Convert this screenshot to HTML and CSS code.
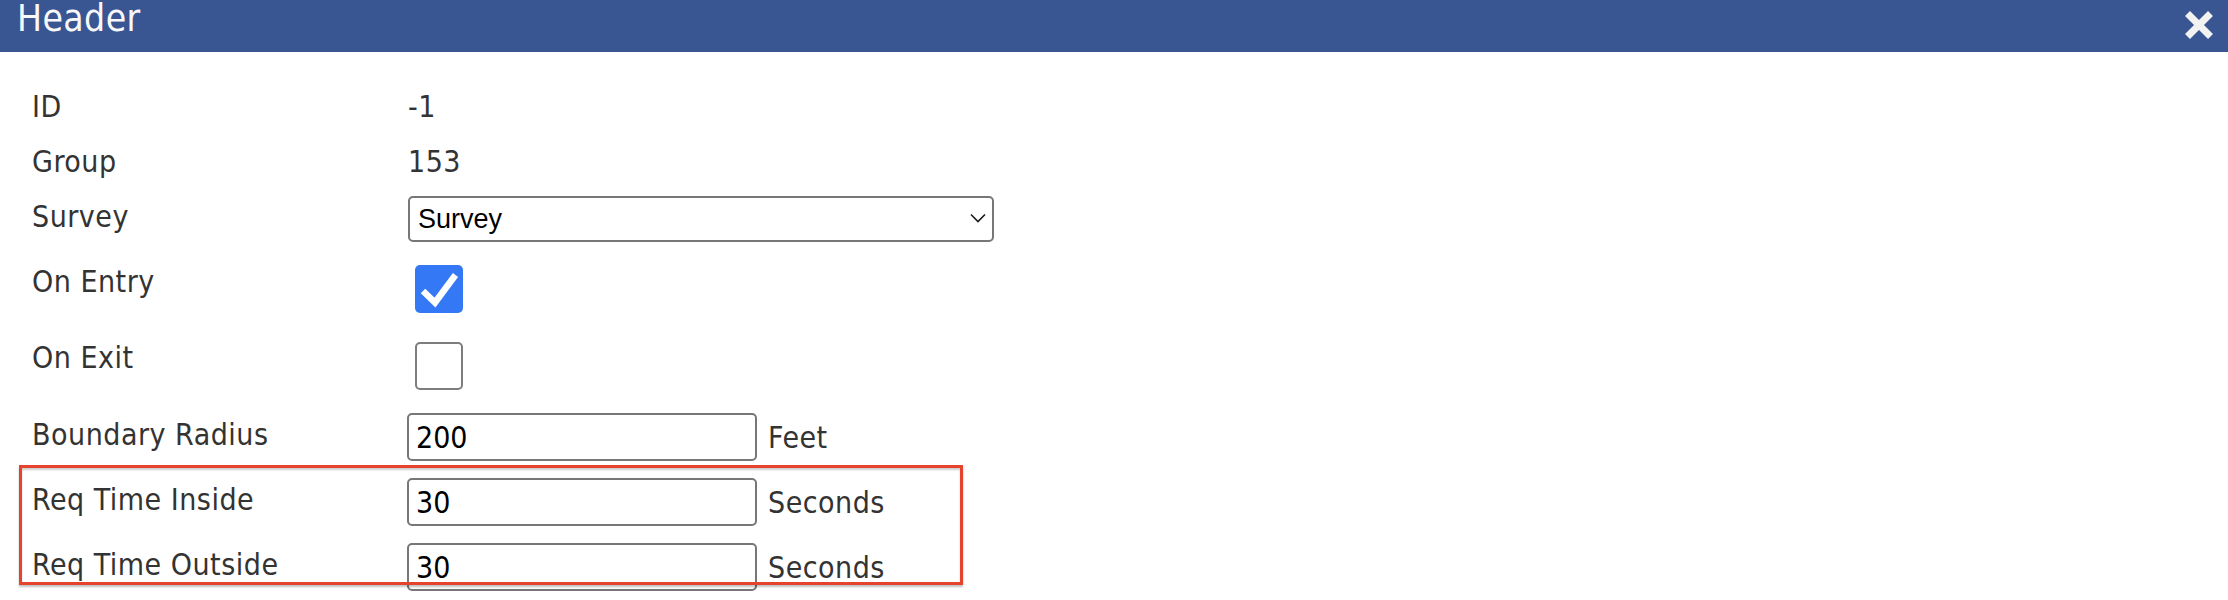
FILE: index.html
```html
<!DOCTYPE html>
<html lang="en">
<head>
<meta charset="utf-8">
<title>Header</title>
<link rel="stylesheet" href="styles.css">
</head>
<body>
<header class="titlebar">
  <span class="title">Header</span>
  <button class="close" type="button" aria-label="Close">
    <svg width="28" height="28" viewBox="0 0 28 28"><path d="M2.5 2.5 L25.5 25.5 M25.5 2.5 L2.5 25.5" stroke="#f2f2f2" stroke-width="7" fill="none"/></svg>
  </button>
</header>
<main class="panel">
  <div class="form">
    <div class="label">ID</div>
    <div class="value">-1</div>

    <div class="label">Group</div>
    <div class="value">153</div>

    <div class="label mt3">Survey</div>
    <div class="select-wrap">
      <select class="select"><option>Survey</option></select>
      <svg class="chevron" width="16" height="10" viewBox="0 0 16 10"><path d="M1 1.5 L8 8.5 L15 1.5" stroke="#1a1a1a" stroke-width="1.6" fill="none"/></svg>
    </div>

    <div class="label">On Entry</div>
    <span class="checkbox checked mt1"><svg width="48" height="48" viewBox="0 0 48 48"><path d="M8 26 L20 37.5 L40.5 10" stroke="#fff" stroke-width="6.5" fill="none"/></svg></span>

    <div class="label">On Exit</div>
    <span class="checkbox unchecked mt2"></span>

    <div class="label mt4">Boundary Radius</div>
    <div class="field"><input class="text" type="text" value="200"><span class="unit">Feet</span></div>

    <div class="label mt4">Req Time Inside</div>
    <div class="field"><input class="text" type="text" value="30"><span class="unit">Seconds</span></div>

    <div class="label mt4">Req Time Outside</div>
    <div class="field"><input class="text" type="text" value="30"><span class="unit">Seconds</span></div>
  </div>
  <div class="highlight"></div>
</main>
</body>
</html>
```

FILE: styles.css
```css
html, body {
  margin: 0;
  padding: 0;
  background: #ffffff;
}

body {
  font-family: "DejaVu Sans Condensed", "DejaVu Sans", sans-serif;
  font-stretch: condensed;
  color: #333333;
}

.titlebar {
  display: flex;
  justify-content: space-between;
  align-items: flex-start;
  height: 52px;
  box-sizing: border-box;
  padding: 0 15px 0 17px;
  background: #395693;
}

.title {
  font-size: 37px;
  line-height: 38px;
  letter-spacing: 0.4px;
  color: #f8f8f8;
}

.close {
  margin: 11px 0 0 0;
  padding: 0;
  border: 0;
  background: none;
  width: 28px;
  height: 28px;
  display: block;
}

.close svg {
  display: block;
}

.panel {
  position: relative;
}

.form {
  display: grid;
  grid-template-columns: 376px 1fr;
  grid-template-rows: 55px 52px 68px 76px 73px 65px 65px 49px;
  align-items: start;
  padding: 37px 0 0 32px;
}

.label,
.value,
.unit {
  font-size: 30px;
  line-height: 35px;
  letter-spacing: 0.5px;
  color: #333333;
}

.mt1 { margin-top: 1px; }
.mt2 { margin-top: 2px; }
.mt3 { margin-top: 3px; }
.mt4 { margin-top: 4px; }

.select-wrap {
  position: relative;
  width: 586px;
  height: 46px;
}

.select {
  appearance: none;
  -webkit-appearance: none;
  width: 100%;
  height: 100%;
  box-sizing: border-box;
  margin: 0;
  padding: 0 40px 0 8px;
  border: 2px solid #777777;
  border-radius: 5px;
  background: #ffffff;
  color: #000000;
  font-family: "Liberation Sans", Arial, sans-serif;
  font-size: 27px;
}

.chevron {
  position: absolute;
  right: 8px;
  top: 17px;
  pointer-events: none;
}

.checkbox {
  display: block;
  width: 48px;
  height: 48px;
  box-sizing: border-box;
  border-radius: 5px;
  margin-left: 7px;
}

.checkbox svg {
  display: block;
}

.checked {
  background: #3478f6;
}

.unchecked {
  border: 2px solid #7d7d7d;
  background: #ffffff;
}

.field {
  display: flex;
  align-items: baseline;
}

.text {
  width: 350px;
  height: 48px;
  box-sizing: border-box;
  margin: 0 0 0 -1px;
  padding: 0 7px;
  border: 2px solid #777777;
  border-radius: 5px;
  background: #ffffff;
  color: #000000;
  font-family: "DejaVu Sans Condensed", "DejaVu Sans", sans-serif;
  font-stretch: condensed;
  font-size: 30px;
}

.unit {
  margin-left: 11px;
}

.highlight {
  position: absolute;
  left: 19px;
  top: 413px;
  width: 944px;
  height: 120px;
  box-sizing: border-box;
  border: 3px solid #e6432e;
  box-shadow: 0 2px 2px rgba(0, 0, 0, 0.25), inset 0 2px 2px rgba(0, 0, 0, 0.2);
  pointer-events: none;
}
```
